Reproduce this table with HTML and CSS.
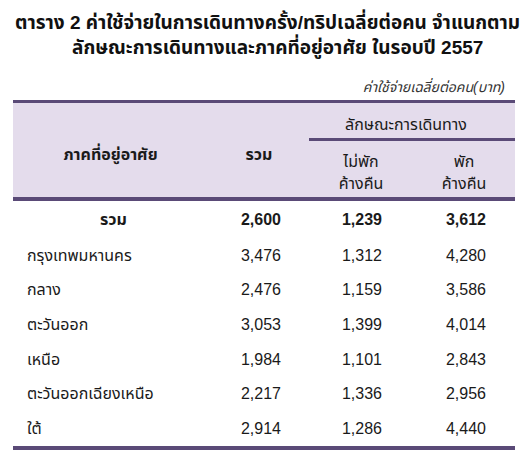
FILE: index.html
```html
<!DOCTYPE html>
<html lang="th">
<head>
<meta charset="utf-8">
<link rel="stylesheet" href="styles.css">
</head>
<body>
<div class="page">
  <h1 class="title">
    <span class="line1">ตาราง 2 ค่าใช้จ่ายในการเดินทางครั้ง/ทริปเฉลี่ยต่อคน จำแนกตาม</span>
    <span class="line2">ลักษณะการเดินทางและภาคที่อยู่อาศัย ในรอบปี 2557</span>
  </h1>
  <div class="unit">ค่าใช้จ่ายเฉลี่ยต่อคน(บาท)</div>
  <table class="data">
    <colgroup>
      <col class="w1"><col class="w2"><col class="w3"><col class="w4">
    </colgroup>
    <thead>
      <tr>
        <th class="c1" rowspan="2">ภาคที่อยู่อาศัย</th>
        <th class="c2" rowspan="2">รวม</th>
        <th class="group" colspan="2">ลักษณะการเดินทาง</th>
      </tr>
      <tr class="h2row">
        <th class="c3">ไม่พัก<br>ค้างคืน</th>
        <th class="c4">พัก<br>ค้างคืน</th>
      </tr>
    </thead>
    <tbody>
      <tr class="total"><td class="lbl">รวม</td><td>2,600</td><td class="n3">1,239</td><td class="n4">3,612</td></tr>
      <tr><td class="lbl">กรุงเทพมหานคร</td><td>3,476</td><td class="n3">1,312</td><td class="n4">4,280</td></tr>
      <tr class="r34"><td class="lbl">กลาง</td><td>2,476</td><td class="n3">1,159</td><td class="n4">3,586</td></tr>
      <tr><td class="lbl">ตะวันออก</td><td>3,053</td><td class="n3">1,399</td><td class="n4">4,014</td></tr>
      <tr><td class="lbl">เหนือ</td><td>1,984</td><td class="n3">1,101</td><td class="n4">2,843</td></tr>
      <tr class="r34"><td class="lbl">ตะวันออกเฉียงเหนือ</td><td>2,217</td><td class="n3">1,336</td><td class="n4">2,956</td></tr>
      <tr class="last"><td class="lbl">ใต้</td><td>2,914</td><td class="n3">1,286</td><td class="n4">4,440</td></tr>
    </tbody>
  </table>
  <div class="rule"></div>
</div>
</body>
</html>
```

FILE: styles.css
```css
html, body {
  margin: 0;
  padding: 0;
  background: #ffffff;
}
body {
  font-family: "Liberation Sans", "Noto Sans Thai", "Loma", "Garuda", "Noto Sans", sans-serif;
  color: #1a1a1a;
}
.page {
  padding: 0 14px 0 13px;
}
.title {
  margin: 0;
  padding-top: 10px;
  font-size: 19px;
  font-weight: bold;
  line-height: 25px;
  color: #111;
}
.title span {
  display: block;
  white-space: nowrap;
}
.line1 { padding-left: 2px; }
.line2 { padding-left: 59px; }
.unit {
  margin-top: 18px;
  text-align: right;
  font-style: italic;
  font-size: 14px;
  line-height: 18px;
  padding-right: 10px;
  color: #333;
}
.data {
  margin-top: 4px;
  width: 502px;
  table-layout: fixed;
  border-collapse: separate;
  border-spacing: 0;
  font-size: 16px;
}
.rule {
  width: 502px;
  height: 4px;
  background: #5a4a77;
}
.w1 { width: 207px; }
.w2 { width: 89px; }
.w3 { width: 104px; }
.w4 { width: 102px; }

.data thead th {
  background: #e4dcec;
  font-weight: normal;
  padding: 0;
  vertical-align: middle;
}
.data thead .c1,
.data thead .c2 {
  font-weight: bold;
  border-top: 3px solid #5a4a77;
  border-bottom: 4px solid #5a4a77;
  padding-top: 10px;
}
.c1 { text-align: center; padding-right: 12px !important; }
.c2 { text-align: center; padding-right: 11px !important; }
.group {
  border-top: 3px solid #5a4a77;
  border-bottom: 3px solid #5a4a77;
  text-align: center;
  line-height: 27px;
  padding: 8px 12px 0 0 !important;
}
.h2row th {
  line-height: 22px;
  padding: 10px 0 2px 0 !important;
  border-bottom: 4px solid #5a4a77;
  text-align: center;
}
.c3 { padding-right: 6px !important; }

.data tbody td {
  height: 35px;
  padding: 0 28px 0 0;
  text-align: right;
  line-height: 20px;
  vertical-align: middle;
}
.data tbody td.n3 { padding-right: 31px; }
.data tbody td.n4 { padding-right: 29px; }
.data tbody tr.r34 td { height: 34px; }
.data tbody td.lbl {
  text-align: left;
  padding: 0 0 0 14px;
}
.data tbody tr.total td {
  font-weight: bold;
  height: 37px;
}
.data tbody tr.total td.lbl {
  padding-left: 87px;
}
```
